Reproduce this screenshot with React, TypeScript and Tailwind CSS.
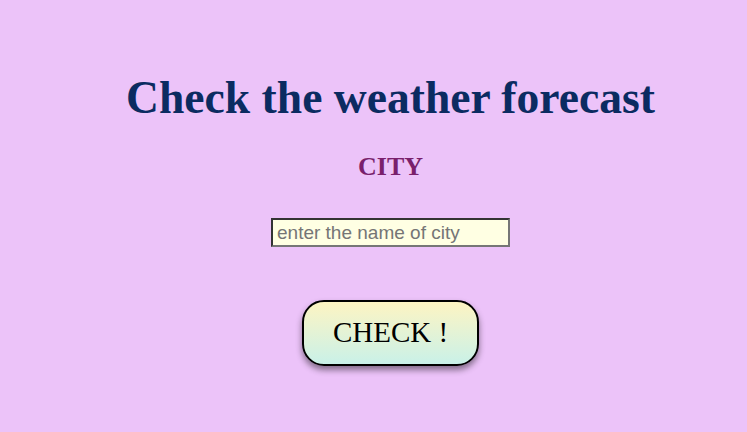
export default function App() {
  return (
    <div className="min-h-screen w-full bg-[#ecc3f9] pl-[34px] font-['Liberation_Serif',serif]">
      <div className="flex flex-col items-center pt-[72px]">
        <h1 className="text-[45.6px] leading-[52px] font-bold text-[#0b2b61]">Check the weather forecast</h1>
        <h2 className="mt-[28px] text-[26px] leading-[30px] font-bold text-[#7a1f6c]">CITY</h2>
        <input
          type="text"
          placeholder="enter the name of city"
          className="mt-[36px] h-[29px] w-[239px] border-2 border-t-[#333] border-l-[#333] border-b-[#767676] border-r-[#767676] bg-[#ffffe3] px-[4px] font-['Liberation_Sans',sans-serif] text-[19px] text-black placeholder:text-[#757575] outline-none"
        />
        <button className="mt-[53px] h-[66px] w-[177px] rounded-[22px] border-2 border-black bg-gradient-to-b from-[#fdf4c2] to-[#c9f1e8] text-[29px] text-black shadow-[0_4px_6px_rgba(0,0,0,0.45)]">
          CHECK !
        </button>
      </div>
    </div>
  );
}
